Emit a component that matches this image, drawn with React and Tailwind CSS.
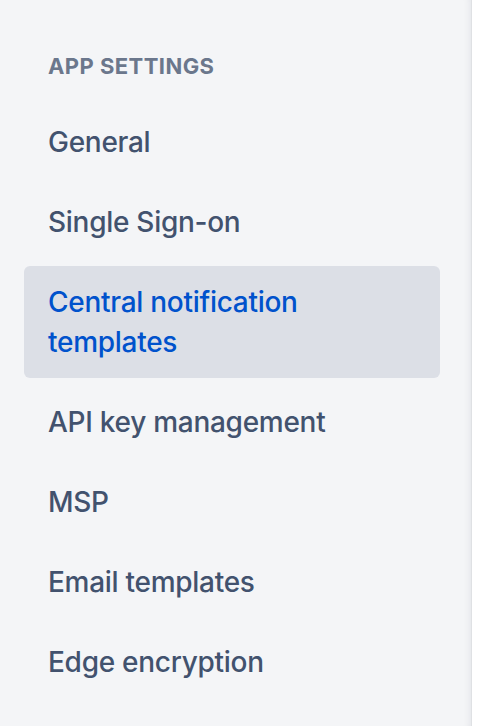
import React from 'react';

const items = [
  { label: 'General' },
  { label: 'Single Sign-on' },
  { label: 'Central notification templates', active: true },
  { label: 'API key management' },
  { label: 'MSP' },
  { label: 'Email templates' },
  { label: 'Edge encryption' },
];

const App = () => {
  return (
    <div className="flex min-h-[726px] bg-white" style={{ fontFamily: 'Inter, "Noto Sans", sans-serif' }}>
      <nav className="w-[472px] min-h-[726px] bg-[#f4f5f7] border-r border-[#dfe1e4] shadow-[inset_-7px_0_7px_-6px_rgba(9,30,66,0.08)] pl-6 pr-[31px]">
        <h2 className="pt-[52px] pl-6 text-[22px] leading-[28px] font-bold tracking-[0.02em] uppercase text-[#6b778c]">
          App settings
        </h2>
        <ul className="mt-[26px] flex flex-col gap-2">
          {items.map((item) => (
            <li
              key={item.label}
              className={
                item.active
                  ? 'rounded-[6px] bg-[#dcdfe6] px-6 py-4 text-[28px] leading-[40px] font-medium tracking-[-0.01em] text-[#0052cc]'
                  : 'rounded-[6px] px-6 py-4 text-[28px] leading-[40px] font-medium tracking-[-0.01em] text-[#42526e]'
              }
            >
              {item.active ? (
                <>
                  Central notification
                  <br />
                  templates
                </>
              ) : (
                item.label
              )}
            </li>
          ))}
        </ul>
      </nav>
    </div>
  );
};

export default App;
